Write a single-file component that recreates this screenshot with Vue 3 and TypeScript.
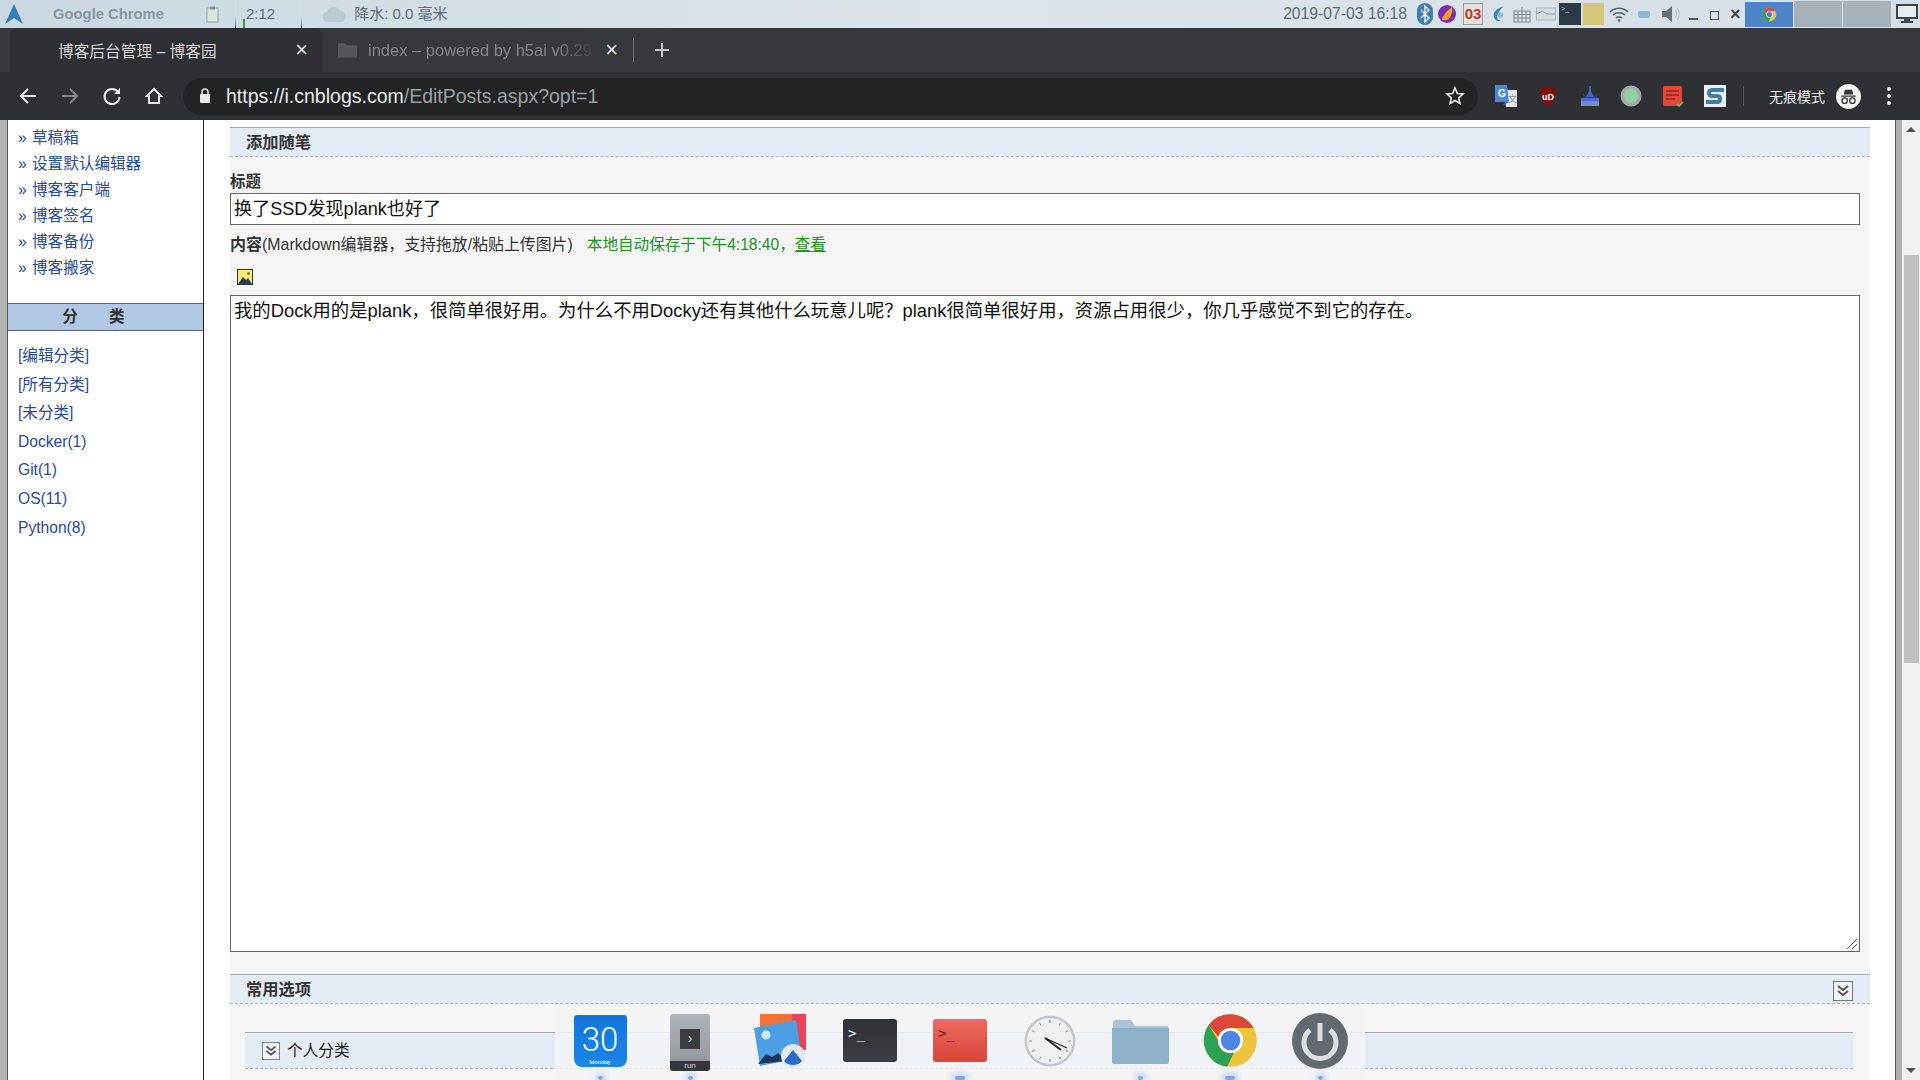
<template>
  <div class="screen">
    <!-- desktop panel -->
    <div class="panel">
      <svg class="arch" viewBox="0 0 20 22"><path d="M10 1 19 21 10 15 1 21z" fill="#2f7fb8" /></svg>
      <span class="app-name">Google Chrome</span>
      <svg class="clip" viewBox="0 0 13 17"><rect x="1" y="2" width="11" height="14" fill="#dfe6d8" stroke="#8ba0b0" /><rect x="4" y="0.5" width="5" height="3" fill="#7d95a8" /></svg>
      <i class="vline first"></i>
      <i class="green"></i>
      <span class="clock-small">2:12</span>
      <i class="vline second"></i>
      <svg class="cloud" viewBox="0 0 24 18"><path d="M6 17a5 5 0 0 1-1-10 7 7 0 0 1 13-1 5.500 5.500 0 0 1 1 11z" fill="#bccad4" /></svg>
      <span class="weather">降水: 0.0 毫米</span>

      <span class="date">2019-07-03 16:18</span>
      <div class="tray">
        <svg class="t bt" viewBox="0 0 16 22"><rect width="16" height="22" rx="8" fill="#3f7fb5" /><path d="M4 7l8 8-4 4V3l4 4-8 8" fill="none" stroke="#fff" stroke-width="1.300" /></svg>
        <svg class="t fire" viewBox="0 0 18 18"><circle cx="9" cy="9" r="9" fill="#7a2fb0" /><path d="M4 15c0-4 3-5 4-8l6-5c1 5-1 11-5 13z" fill="#f2a02c" /></svg>
        <div class="t cal">03</div>
        <svg class="t swirl" viewBox="0 0 16 20"><path d="M13 2C6 4 2 8 3 13c1 4 5 6 8 4-4 0-5-3-4-6s3-6 6-9z" fill="#3c86b0" /><circle cx="10" cy="11" r="3" fill="#8ab8d0" /></svg>
        <svg class="t kb" viewBox="0 0 18 18"><rect x="1" y="6" width="16" height="11" fill="none" stroke="#7d8a92" /><path d="M1 9.500h16M1 13h16M5 6v11M9 6v11M13 6v11M9 6V2" stroke="#7d8a92" fill="none" /></svg>
        <svg class="t net" viewBox="0 0 20 14"><rect x="0.500" y="1" width="19" height="12" fill="#d3dde2" stroke="#aab6bd" /><path d="M1 7l5-3 5 3h8" stroke="#8f9ca4" fill="none" /></svg>
        <div class="t term"><span>&gt;_</span></div>
        <div class="t note"></div>
        <svg class="t wifi" viewBox="0 0 20 15"><path d="M1 5c5-5 13-5 18 0M4 8c3-3 9-3 12 0M7 11c1.500-1.500 4.500-1.500 6 0" fill="none" stroke="#56646c" stroke-width="1.500" /><circle cx="10" cy="13.500" r="1.300" fill="#56646c" /></svg>
        <i class="t pill"></i>
        <svg class="t vol" viewBox="0 0 20 20"><path d="M1 7h4l6-5v16l-6-5H1z" fill="#66737b" /><path d="M14 6c2 2 2 6 0 8M16 4c3 3 3 9 0 12" stroke="#b3bfc6" fill="none" /></svg>
        <i class="t w-min"></i>
        <i class="t w-max"></i>
        <span class="t w-close">×</span>
      </div>
      <div class="task active">
        <svg width="15" height="15" viewBox="0 0 48 48"><circle cx="24" cy="24" r="22" fill="#e8c43c" /><path d="M24 2a22 22 0 0 1 19 11H24a11 11 0 0 0-10.500 7.700L6 11.400A22 22 0 0 1 24 2z" fill="#d9483b" /><path d="M6 11.400 15.500 28A11 11 0 0 0 27 34.600L21.400 45.800A22 22 0 0 1 6 11.400z" fill="#2e9e50" /><circle cx="24" cy="24" r="10.500" fill="#fff" /><circle cx="24" cy="24" r="8.500" fill="#4a84e0" /></svg>
      </div>
      <div class="task"></div>
      <div class="task"></div>
      <svg class="monitor" viewBox="0 0 22 20"><rect x="1" y="1" width="20" height="13" fill="#e6edf0" stroke="#3c464c" stroke-width="2" /><path d="M8 15h6v2h3v2H5v-2h3z" fill="#3c464c" /></svg>
    </div>

    <!-- tab strip -->
    <div class="tabs">
      <div class="tab current">
        <span class="tab-title">博客后台管理 – 博客园</span>
        <span class="tab-x">×</span>
      </div>
      <div class="tab other">
        <svg class="folder" viewBox="0 0 20 16"><path d="M0 1h7l2 2h11v13H0z" fill="#55565a" /></svg>
        <span class="tab-title faded">index – powered by h5ai v0.29</span>
        <span class="tab-x">×</span>
      </div>
      <i class="tab-sep"></i>
      <svg class="plus" viewBox="0 0 14 14"><path d="M7 0v14M0 7h14" stroke="#c8cacc" stroke-width="2" /></svg>
    </div>

    <!-- toolbar -->
    <div class="toolbar">
      <svg class="nav" viewBox="0 0 20 20"><path d="M18 10H3M10 3l-7 7 7 7" fill="none" stroke="#e8eaed" stroke-width="2" /></svg>
      <svg class="nav" viewBox="0 0 20 20"><path d="M2 10h15M10 3l7 7-7 7" fill="none" stroke="#85878a" stroke-width="2" /></svg>
      <svg class="nav" viewBox="0 0 20 20"><path d="M16 6a7.500 7.500 0 1 0 1.500 5" fill="none" stroke="#e8eaed" stroke-width="2" /><path d="M18 2v6h-6z" fill="#e8eaed" /></svg>
      <svg class="nav" viewBox="0 0 20 20"><path d="M10 3 3 10h2v7h10v-7h2z" fill="none" stroke="#e8eaed" stroke-width="2" /></svg>
      <div class="omnibox">
        <svg class="lock" viewBox="0 0 12 16"><rect x="1" y="6" width="10" height="9" rx="1" fill="#e8eaed" /><path d="M3 6V4a3 3 0 0 1 6 0v2" fill="none" stroke="#e8eaed" stroke-width="1.500" /></svg>
        <span class="url">https://i.cnblogs.com<em>/EditPosts.aspx?opt=1</em></span>
        <svg class="star" viewBox="0 0 20 20"><path d="M10 2l2.400 5.500 5.600.5-4.300 3.800 1.300 5.700L10 14.500l-5 3 1.300-5.700L2 8l5.600-.5z" fill="none" stroke="#e8eaed" stroke-width="1.600" /></svg>
      </div>
      <div class="exts">
        <svg class="ext" viewBox="0 0 22 22"><path d="M9 5h13v17H11z" fill="#e6e8ee" /><text x="13" y="17" font-size="9" fill="#8a8f99">文</text><path d="M0 0h12l2 17H0z" fill="#4a88e0" /><text x="3" y="12" font-size="10" font-weight="bold" fill="#fff">G</text><path d="M7 21l4-4h3z" fill="#3b6db8" /></svg>
        <svg class="ext" viewBox="0 0 22 22"><path d="M11 1l8 3c0 8-2 14-8 17C5 18 3 12 3 4z" fill="#7c0d12" /><text x="11" y="14.500" font-size="9" font-weight="bold" fill="#fff" text-anchor="middle">uD</text></svg>
        <svg class="ext" viewBox="0 0 22 22"><path d="M10 1h2v5l3 6H7l3-6z" fill="#4463c0" /><path d="M4 9l3 4h8l3-4" fill="none" stroke="#3252a8" /><rect x="2" y="13" width="18" height="3" fill="#4c6cc8" /><rect x="2" y="16" width="18" height="5" fill="#7088dc" /></svg>
        <svg class="ext" viewBox="0 0 22 22"><circle cx="11" cy="11" r="10.500" fill="#a9a9a9" /><circle cx="11" cy="11" r="7" fill="#8ed1a2" /></svg>
        <svg class="ext" viewBox="0 0 22 22"><rect x="1" y="1" width="19" height="20" rx="2" fill="#e5463c" /><path d="M4 6h13M4 10h13M4 14h9" stroke="#8e2a24" stroke-width="1.500" /><path d="M15 19l2 2 4-4" stroke="#6dc35a" stroke-width="1.500" fill="none" /></svg>
        <svg class="ext" viewBox="0 0 22 22"><rect width="22" height="22" fill="#eef3f6" /><path d="M20 5H8c-4 0-4 6 0 6h6c3 0 3 6-1 6H2" fill="none" stroke="#3b7fae" stroke-width="4" /></svg>
      </div>
      <i class="bar-sep"></i>
      <span class="incognito">无痕模式</span>
      <svg class="avatar" viewBox="0 0 24 24"><circle cx="12" cy="12" r="12" fill="#f1f3f4" /><path d="M5 11h14v1.200H5zM8.500 5.500h7l1 4.500h-9z" fill="#35363a" /><circle cx="8.300" cy="16" r="2.600" fill="none" stroke="#35363a" stroke-width="1.200" /><circle cx="15.700" cy="16" r="2.600" fill="none" stroke="#35363a" stroke-width="1.200" /></svg>
      <div class="dots"><i></i><i></i><i></i></div>
    </div>

    <!-- page -->
    <div class="page">
      <div class="edge"></div>
      <aside class="sidebar">
        <ul class="tools">
          <li v-for="item in tools" :key="item"><span class="raquo">»</span><a>{{ item }}</a></li>
        </ul>
        <div class="side-head">分　　类</div>
        <ul class="cats">
          <li v-for="c in categories" :key="c"><a>{{ c }}</a></li>
        </ul>
      </aside>

      <main class="main">
        <section class="form">
          <h3 class="bar">添加随笔</h3>
          <label class="lbl">标题</label>
          <div class="field title">换了SSD发现plank也好了</div>
          <div class="content-line">
            <b>内容</b><span class="hint">(Markdown编辑器，支持拖放/粘贴上传图片)</span>
            <span class="saved">本地自动保存于下午4:18:40，<u>查看</u></span>
          </div>
          <svg class="pic" viewBox="0 0 16 16"><rect x="0.500" y="0.500" width="15" height="15" fill="#f6ec7a" stroke="#333" /><path d="M1 15l5-7 3 3 2-2 4 6z" fill="#2e3a52" /><circle cx="11.500" cy="4.500" r="1.500" fill="#8a7a30" /></svg>
          <div class="field body">
            我的Dock用的是plank，很简单很好用。为什么不用Docky还有其他什么玩意儿呢？plank很简单很好用，资源占用很少，你几乎感觉不到它的存在。
            <svg class="grip" viewBox="0 0 12 12"><path d="M11 1 1 11M11 6l-5 5" stroke="#555" /></svg>
          </div>
          <h3 class="bar options">常用选项
            <svg class="toggle" viewBox="0 0 20 20"><rect x="0.500" y="0.500" width="19" height="19" fill="#eef2f7" stroke="#777" /><path d="M5 5l5 4 5-4M5 10l5 4 5-4" fill="none" stroke="#555" stroke-width="2" /></svg>
          </h3>
          <h4 class="sub">
            <svg class="toggle small" viewBox="0 0 20 20"><rect x="0.500" y="0.500" width="19" height="19" fill="#eef2f7" stroke="#777" /><path d="M5 5l5 4 5-4M5 10l5 4 5-4" fill="none" stroke="#555" stroke-width="2" /></svg>
            <span class="sub-text">个人分类</span>
          </h4>
        </section>
      </main>

      <div class="scroll-edge"></div>
      <div class="scrollbar">
        <i class="arrow up"></i>
        <div class="thumb"></div>
        <i class="arrow down"></i>
      </div>

      <!-- dock floats over the page -->
      <div class="dock">
        <div class="slot">
          <div class="d-cal"><span class="num">30</span><span class="day">Monday</span></div>
          <i class="ind"></i>
        </div>
        <div class="slot">
          <div class="d-run"><div class="d-run-box">›</div><div class="d-run-foot">run</div></div>
          <i class="ind"></i>
        </div>
        <div class="slot">
          <svg class="d-photos" viewBox="0 0 52 54"><path d="M6 0h46v36H6z" fill="#f2703a" /><path d="M38 0h14v36H38z" fill="#e8445a" /><path d="M0 14 42 6l6 38-42 8z" fill="#4d9fe4" /><circle cx="12" cy="21" r="4.500" fill="#cfe6fa" /><path d="M4 50l8-10 6 3 6-4 8 8z" fill="#1c3658" /><circle cx="39" cy="42" r="12" fill="#dfe8f2" /><path d="M30 47l9-11 9 11a12 12 0 0 1-18 0z" fill="#2a6cc8" /></svg>
        </div>
        <div class="slot">
          <div class="d-term dark"><span>&gt;_</span></div>
        </div>
        <div class="slot">
          <div class="d-term red"><span>&gt;_</span></div>
          <i class="ind double"></i>
        </div>
        <div class="slot">
          <svg class="d-clock" viewBox="0 0 52 52"><circle cx="26" cy="26" r="25.500" fill="#c4c7ca" /><circle cx="26" cy="26" r="23" fill="#eef0f1" /><path d="M21 23 43 33" stroke="#222" stroke-width="1.200" /><path d="M21 23 37 35" stroke="#222" stroke-width="2" /><path d="M26 5v3M26 44v3M5 26h3M44 26h3M36.500 7.800l-1.500 2.600M17 41.600l-1.500 2.600M44.200 15.500l-2.600 1.500M10.400 35l-2.600 1.500M15.500 7.800l1.500 2.600M35 41.600l1.500 2.600M7.800 15.500l2.600 1.500M41.600 35l2.600 1.500" stroke="#888" /></svg>
        </div>
        <div class="slot">
          <svg class="d-folder" viewBox="0 0 59 45"><path d="M2 4a3 3 0 0 1 3-3h15l4 6h33v6H2z" fill="#a9c4d8" /><path d="M1 9h57v34a2 2 0 0 1-2 2H3a2 2 0 0 1-2-2z" fill="#8eb2ca" /></svg>
          <i class="ind"></i>
        </div>
        <div class="slot">
          <svg class="d-chrome" viewBox="0 0 48 48"><circle cx="24" cy="24" r="23" fill="#edc53c" /><path d="M24 1a23 23 0 0 1 20 12H24a11 11 0 0 0-10.500 7.700L5 10.500A23 23 0 0 1 24 1z" fill="#d9483b" /><path d="M5 10.500 15.500 28A11 11 0 0 0 27 34.600L21 46.800A23 23 0 0 1 5 10.500z" fill="#2ea152" /><circle cx="24" cy="24" r="11" fill="#fff" /><circle cx="24" cy="24" r="8.500" fill="#4a86e2" /></svg>
          <i class="ind double"></i>
        </div>
        <div class="slot">
          <svg class="d-power" viewBox="0 0 58 58"><circle cx="29" cy="29" r="28" fill="#62696f" /><path d="M19 18a16 16 0 1 0 20 0" fill="none" stroke="#dcdfe1" stroke-width="5" /><path d="M29 11v18" stroke="#dcdfe1" stroke-width="5" /></svg>
          <i class="ind"></i>
        </div>
      </div>
    </div>
  </div>
</template>

<script setup lang="ts">
const tools: string[] = ['草稿箱', '设置默认编辑器', '博客客户端', '博客签名', '博客备份', '博客搬家']

const categories: string[] = [
  '[编辑分类]',
  '[所有分类]',
  '[未分类]',
  'Docker(1)',
  'Git(1)',
  'OS(11)',
  'Python(8)',
]
</script>

<style>
html,
body {
  margin: 0;
  overflow: hidden;
}
</style>

<style scoped>
.screen {
  width: 1920px;
  height: 1080px;
  display: flex;
  flex-direction: column;
  overflow: hidden;
  font-family: "Liberation Sans", "Noto Sans CJK SC", sans-serif;
}

/* panel */
.panel {
  height: 28px;
  flex: none;
  display: flex;
  align-items: center;
  background: linear-gradient(90deg, #cbd8e1, #dde5ea 50%, #d5dfe6);
  color: #5f6c76;
  font-size: 15px;
}
.arch {
  width: 20px;
  height: 22px;
  margin-left: 4px;
}
.app-name {
  margin-left: 29px;
  font-size: 14.800px;
  font-weight: bold;
  color: #8996a2;
}
.clip {
  width: 13px;
  height: 17px;
  margin-left: 42px;
}
.vline {
  width: 1px;
  height: 28px;
  background: linear-gradient(#d5dfe6 60%, #44505a);
}
.vline.first {
  margin-left: 16px;
}
.vline.second {
  margin-left: 26px;
}
.green {
  width: 2px;
  height: 9px;
  margin: 19px 0 0 7px;
  background: #2aa14a;
}
.clock-small {
  margin-left: 1px;
  margin-bottom: 1px;
}
.cloud {
  width: 24px;
  height: 18px;
  margin-left: 20px;
}
.weather {
  margin-left: 8px;
  margin-bottom: 3px;
}
.date {
  margin-left: auto;
  font-size: 15.700px;
}
.tray {
  display: flex;
  align-items: center;
  margin-left: 10px;
  width: 328px;
}
.t {
  flex: none;
  display: block;
}
.bt { width: 16px; height: 22px; }
.fire { width: 18px; height: 18px; margin-left: 5px; }
.cal {
  width: 20px;
  height: 22px;
  margin-left: 7px;
  background: #e6e2dc;
  border: 1px solid #a09a98;
  box-sizing: border-box;
  color: #d2302c;
  font-size: 15px;
  font-weight: bold;
  line-height: 20px;
  text-align: center;
}
.swirl { width: 15px; height: 20px; margin-left: 8px; }
.kb { width: 18px; height: 18px; margin-left: 7px; }
.net { width: 20px; height: 14px; margin-left: 5px; }
.term {
  width: 22px;
  height: 22px;
  margin-left: 3px;
  background: #2c3a48;
  color: #c5ced4;
  font-size: 7px;
  line-height: 12px;
  padding-left: 2px;
  box-sizing: border-box;
}
.note { width: 21px; height: 22px; margin-left: 2px; background: #d3c77c; }
.wifi { width: 20px; height: 15px; margin-left: 5px; }
.pill { width: 12px; height: 7px; margin-left: 9px; border-radius: 2px; background: #8db4e4; }
.vol { width: 20px; height: 20px; margin-left: 11px; }
.w-min { width: 9px; height: 2px; margin: 10px 0 0 8px; background: #555; }
.w-max { width: 7px; height: 7px; margin: 2px 0 0 12px; border: 1px solid #555; }
.w-close { margin-left: 11px; font-size: 18px; font-weight: bold; line-height: 18px; color: #444; }
.task {
  width: 48px;
  height: 26px;
  margin-right: 1px;
  display: flex;
  align-items: center;
  justify-content: center;
  background: #a6b1b9;
}
.task.active {
  background: #4d86c6;
  border-top: 1px solid #e8f0f6;
  height: 25px;
}
.monitor {
  width: 22px;
  height: 20px;
  margin: 0 2px 0 4px;
}

/* tabs */
.tabs {
  height: 44px;
  flex: none;
  display: flex;
  align-items: flex-end;
  background: #37383b;
  padding-left: 10px;
  color: #d4d6d8;
  font-size: 15.700px;
}
.tab {
  height: 44px;
  display: flex;
  align-items: center;
  box-sizing: border-box;
}
.tab.current {
  width: 312px;
  padding: 0 14px 0 48px;
  background: #2e3033;
  border-radius: 8px 8px 0 0;
}
.tab.other {
  width: 310px;
  padding: 0 14px 0 16px;
  color: #85878a;
  font-size: 16.500px;
}
.folder {
  width: 19px;
  height: 16px;
  margin-right: 11px;
}
.tab-title {
  flex: 1;
  min-width: 0;
  white-space: nowrap;
  overflow: hidden;
}
.tab-title.faded {
  margin-right: 8px;
  -webkit-mask-image: linear-gradient(90deg, #000 82%, transparent);
  mask-image: linear-gradient(90deg, #000 82%, transparent);
}
.tab-x {
  font-size: 22px;
  line-height: 22px;
  color: #e0e2e4;
}
.tab-sep {
  align-self: center;
  width: 1px;
  height: 24px;
  margin-left: 1px;
  background: #6c6e71;
}
.plus {
  align-self: center;
  width: 14px;
  height: 14px;
  margin-left: 21px;
}

/* toolbar */
.toolbar {
  height: 48px;
  flex: none;
  display: flex;
  align-items: center;
  background: #2e3033;
  padding-left: 18px;
}
.nav {
  width: 20px;
  height: 20px;
  margin-right: 22px;
  flex: none;
}
.omnibox {
  width: 1295px;
  height: 37px;
  margin-left: -3px;
  flex: none;
  display: flex;
  align-items: center;
  border-radius: 19px;
  background: #212325;
  box-sizing: border-box;
  padding: 0 13px 0 16px;
}
.lock {
  width: 12px;
  height: 16px;
}
.url {
  margin-left: 15px;
  font-size: 19.500px;
  color: #e8eaed;
  white-space: nowrap;
}
.url em {
  font-style: normal;
  color: #9aa0a6;
}
.star {
  width: 20px;
  height: 20px;
  margin-left: auto;
}
.exts {
  display: flex;
  gap: 19.800px;
  margin-left: 17px;
}
.ext {
  width: 22px;
  height: 22px;
  flex: none;
}
.bar-sep {
  width: 1px;
  height: 20px;
  margin-left: 17px;
  background: #55575a;
}
.incognito {
  margin-left: 25px;
  font-size: 14px;
  color: #e8eaed;
}
.avatar {
  width: 25px;
  height: 25px;
  margin-left: 11px;
}
.dots {
  display: flex;
  flex-direction: column;
  gap: 3px;
  margin-left: 26px;
}
.dots i {
  width: 4px;
  height: 4px;
  border-radius: 50%;
  background: #e8eaed;
}

/* page */
.page {
  flex: 1;
  min-height: 0;
  position: relative;
  display: flex;
  background: #fff;
  font-size: 15.400px;
  color: #222;
}
.edge {
  width: 7px;
  flex: none;
  background: #b4b4b4;
  border-right: 1px solid #555;
}
.sidebar {
  width: 195px;
  flex: none;
  border-right: 1px solid #222;
  font-size: 15.600px;
}
.sidebar ul {
  list-style: none;
  margin: 0;
  padding: 0;
}
.sidebar a {
  color: #2b4a90;
}
.tools {
  padding: 5px 0 0 10px !important;
}
.tools li {
  height: 26px;
  line-height: 26px;
}
.raquo {
  display: inline-block;
  width: 14px;
  color: #2b4a90;
}
.side-head {
  margin-top: 22px;
  height: 26px;
  line-height: 26px;
  box-sizing: content-box;
  background: #b1c8e5;
  border-top: 1px solid #666;
  border-bottom: 1px solid #666;
  text-align: center;
  font-weight: bold;
  color: #333;
  padding-right: 24px;
}
.cats {
  padding: 11px 0 0 10px !important;
}
.cats li {
  height: 28.600px;
  line-height: 28.600px;
}
.main {
  width: 1691px;
  flex: none;
  box-sizing: border-box;
  padding: 7px 0 0 26px;
}
.form {
  width: 1640px;
  height: 960px;
  background: #f5f5f5;
}
.bar {
  position: relative;
  margin: 0;
  height: 30px;
  line-height: 29px;
  box-sizing: border-box;
  padding-left: 16px;
  font-size: 16.300px;
  color: #333;
  background: #e3ebf5;
  border-top: 1px solid #aaa;
  border-bottom: 1px dashed #b4b4b4;
}
.lbl {
  display: block;
  margin-top: 14px;
  line-height: 22px;
  font-weight: bold;
  color: #333;
}
.field {
  width: 1630px;
  box-sizing: border-box;
  background: #fff;
  border: 1px solid #666;
  padding: 0 3px;
  font-size: 18.350px;
  color: #111;
}
.title {
  height: 32px;
  line-height: 30px;
  font-size: 18.100px;
}
.content-line {
  margin-top: 9px;
  height: 22px;
  line-height: 22px;
  white-space: nowrap;
}
.content-line b {
  font-size: 16px;
  color: #333;
}
.hint {
  font-size: 15.900px;
  color: #333;
}
.saved {
  margin-left: 14px;
  font-size: 15.600px;
  color: #23902a;
}
.pic {
  display: block;
  width: 16px;
  height: 16px;
  margin: 13px 0 0 7px;
}
.body {
  position: relative;
  height: 657px;
  margin-top: 10px;
  line-height: 30px;
  white-space: nowrap;
}
.grip {
  position: absolute;
  right: 1px;
  bottom: 1px;
  width: 12px;
  height: 12px;
}
.options {
  margin-top: 22px;
}
.toggle {
  position: absolute;
  right: 17px;
  top: 6px;
  width: 20px;
  height: 20px;
}
.sub {
  width: 1608px;
  height: 37px;
  margin: 28px 0 0 15px;
  box-sizing: border-box;
  display: flex;
  align-items: center;
  padding-left: 17px;
  background: #e3ebf5;
  border-top: 1px solid #aaa;
  border-bottom: 1px dashed #b4b4b4;
  font-size: 15.700px;
  font-weight: normal;
}
.sub-text {
  margin-bottom: 3px;
}
.toggle.small {
  position: static;
  width: 18px;
  height: 18px;
  margin-right: 7px;
}
.scroll-edge {
  width: 7px;
  flex: none;
  background: #b0b0b0;
  border-left: 1px solid #555;
  box-sizing: border-box;
}
.scrollbar {
  flex: 1;
  display: flex;
  flex-direction: column;
  align-items: center;
  background: #f1f1f1;
  padding: 7px 0;
}
.thumb {
  width: 15px;
  height: 408px;
  margin-top: 123px;
  background: #c1c1c1;
}
.arrow {
  width: 0;
  height: 0;
  border-left: 5px solid transparent;
  border-right: 5px solid transparent;
}
.arrow.up {
  border-bottom: 5px solid #505050;
}
.arrow.down {
  margin-top: auto;
  border-top: 5px solid #505050;
}

/* dock */
.dock {
  position: absolute;
  left: 555px;
  bottom: 0;
  width: 810px;
  height: 76px;
  display: flex;
  background: rgba(243, 243, 244, 0.84);
}
.slot {
  position: relative;
  width: 90px;
  flex: none;
  height: 76px;
  display: flex;
  justify-content: center;
  padding-top: 10px;
  box-sizing: border-box;
}
.ind {
  position: absolute;
  left: 50%;
  bottom: 0;
  width: 5px;
  height: 4px;
  margin-left: -2px;
  border-radius: 50%;
  background: #7ea6f2;
  box-shadow: 0 0 5px 4px rgba(120, 160, 245, 0.28);
}
.ind.double {
  width: 10px;
  margin-left: -5px;
  border-radius: 3px;
}
.d-cal {
  width: 53px;
  height: 52px;
  margin-top: 1px;
  border-radius: 3px 3px 8px 8px;
  background: linear-gradient(#1176dc, #1a86e6);
  color: #fff;
  text-align: center;
  display: flex;
  flex-direction: column;
  align-items: center;
  font-family: Roboto, sans-serif;
}
.d-cal .num {
  font-size: 33px;
  font-weight: 300;
  line-height: 38px;
  margin-top: 6px;
}
.d-cal .day {
  font-size: 6px;
  line-height: 6px;
}
.d-run {
  width: 40px;
  height: 57px;
  display: flex;
  flex-direction: column;
  align-items: center;
  justify-content: flex-end;
  border-radius: 3px;
  background: linear-gradient(#b0b4b8, #8f9499);
  overflow: hidden;
}
.d-run-box {
  width: 20px;
  height: 20px;
  margin-bottom: 12px;
  background: #3a3c3f;
  color: #ddd;
  font-size: 14px;
  line-height: 18px;
  text-align: center;
}
.d-run-foot {
  width: 100%;
  height: 10px;
  background: #33363a;
  color: #ddd;
  font-size: 8px;
  line-height: 10px;
  text-align: center;
}
.d-photos {
  width: 52px;
  height: 54px;
}
.d-term {
  width: 54px;
  height: 43px;
  margin-top: 5px;
  border-radius: 3px;
  font-family: "DejaVu Sans Mono", monospace;
  font-size: 14px;
  line-height: 28px;
  padding-left: 5px;
  box-sizing: border-box;
}
.d-term.dark {
  background: linear-gradient(#2f3336, #3b3f42);
  color: #f2f2f2;
}
.d-term.red {
  background: linear-gradient(#ee6a5e, #d9453a);
  color: #5c120e;
}
.d-clock {
  width: 52px;
  height: 52px;
  margin-top: 1px;
}
.d-folder {
  width: 59px;
  height: 45px;
  margin-top: 5px;
}
.d-chrome {
  width: 55px;
  height: 55px;
  margin-top: -1px;
}
.d-power {
  width: 58px;
  height: 58px;
  margin-top: -2px;
}
</style>
